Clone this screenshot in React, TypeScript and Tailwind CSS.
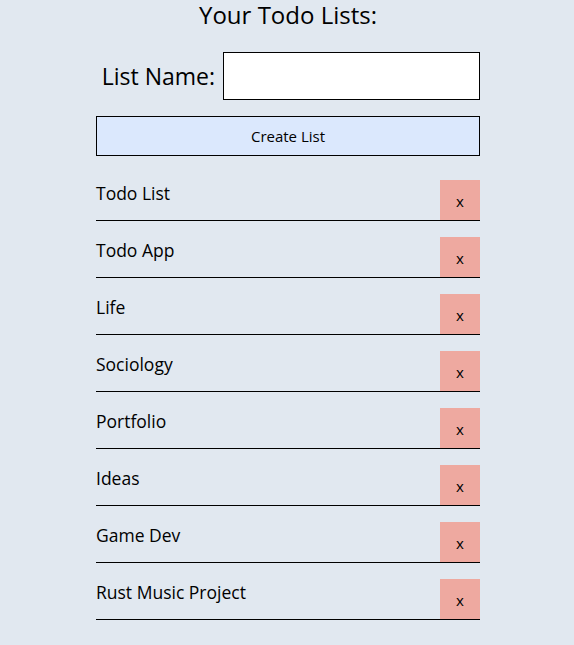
import React from "react";

const lists = [
  "Todo List",
  "Todo App",
  "Life",
  "Sociology",
  "Portfolio",
  "Ideas",
  "Game Dev",
  "Rust Music Project",
];

export default function App() {
  return (
    <div
      className="min-h-[645px] w-full bg-[#e1e8f0] pt-[1px] text-black"
      style={{ fontFamily: '"Open Sans", "Noto Sans", sans-serif' }}
    >
      <div className="ml-[96px] flex w-[384px] flex-col">
        <h1 className="text-center text-[24px] leading-[27px]">Your Todo Lists:</h1>
        <div className="mt-[24px] flex items-center justify-end gap-[8px]">
          <label className="text-[23px] leading-[32px]">List Name:</label>
          <input
            className="h-[48px] w-[257px] border border-black bg-white px-2 text-[18px] outline-none"
            type="text"
          />
        </div>
        <button className="mt-[16px] h-[40px] w-full border border-black bg-[#dbe8fd] text-[15px]">
          Create List
        </button>
        <div className="mt-[24px] flex flex-col gap-[16px]">
          {lists.map((name) => (
            <div key={name} className="flex items-start justify-between border-b border-black">
              <span className="text-[17.5px] leading-[27px]">{name}</span>
              <button className="h-[40px] w-[40px] bg-[#eea9a0] pt-[2px] text-[15px]">x</button>
            </div>
          ))}
        </div>
      </div>
    </div>
  );
}
